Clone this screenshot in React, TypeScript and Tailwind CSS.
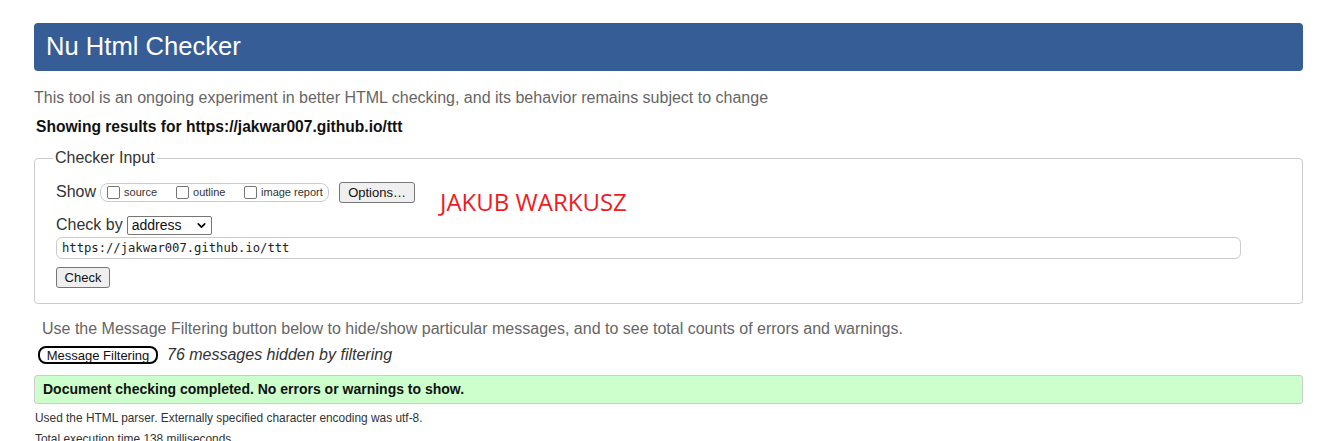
import { ChevronDown } from 'lucide-react'

const arial = 'font-["Liberation_Sans",Arial,sans-serif]'

function Checkbox({ label, width }: { label: string; width: string }) {
  return (
    <label className={`flex items-center ${width}`}>
      <span className="h-[13px] w-[13px] rounded-[2px] border border-[#767676] bg-white" />
      <span className="ml-[4px] text-[11px] leading-[13px] text-[#333]">{label}</span>
    </label>
  )
}

export default function App() {
  return (
    <div className={`relative min-h-[441px] bg-white pt-[23px] ${arial}`}>
      <div className="ml-[34px] w-[1269px]">
        <div className="flex h-[48px] items-center rounded-[4px] bg-[#365d96] px-[12px]">
          <h1 className="text-[25.6px] leading-none text-white">Nu Html Checker</h1>
        </div>

        <p className="mt-[17px] text-[16px] leading-[20px] text-[#666]">
          This tool is an ongoing experiment in better HTML checking, and its behavior remains subject to change
        </p>
        <p className="mt-[9px] ml-[2px] text-[15.6px] font-bold leading-[20px] text-[#111]">
          Showing results for https://jakwar007.github.io/ttt
        </p>

        <fieldset className="mt-[11px] rounded-[4px] border border-[#ccc] px-[21px] pb-[14px]">
          <legend className="-ml-[3px] px-[2px] text-[16px] leading-[20px] text-[#333]">Checker Input</legend>

          <div className="mt-[13px] flex h-[22px] items-center">
            <span className="text-[16px] text-[#333]">Show</span>
            <div className="ml-[4px] flex h-[19px] w-[229px] items-center rounded-[8px] border border-[#ccc] pl-[6px]">
              <Checkbox label="source" width="w-[69px]" />
              <Checkbox label="outline" width="w-[68px]" />
              <Checkbox label="image report" width="w-[80px]" />
            </div>
            <button className="ml-[10px] h-[21px] w-[76px] rounded-[3px] border border-[#767676] bg-[#efefef] text-[13px] text-[#111]">
              Options…
            </button>
          </div>

          <div className="mt-[12px] flex h-[20px] items-center">
            <span className="text-[16px] text-[#333]">Check by</span>
            <div className="ml-[4px] flex h-[19px] w-[85px] items-center justify-between rounded-[2px] border border-[#767676] bg-white pl-[4px] pr-[3px]">
              <span className="text-[14px] leading-none text-[#111]">address</span>
              <ChevronDown className="h-[13px] w-[13px] text-black" strokeWidth={3} />
            </div>
          </div>

          <div className="mt-[2px] flex h-[22px] w-[1185px] items-center rounded-[6px] border border-[#ccc] px-[5px]">
            <span className='font-["DejaVu_Sans_Mono",monospace] text-[12.2px] text-[#222]'>
              https://jakwar007.github.io/ttt
            </span>
          </div>

          <button className="mt-[8px] h-[21px] w-[54px] rounded-[3px] border border-[#767676] bg-[#efefef] text-[13px] text-[#111]">
            Check
          </button>
        </fieldset>

        <p className="mt-[15px] ml-[8px] text-[16px] leading-[20px] text-[#666]">
          Use the Message Filtering button below to hide/show particular messages, and to see total counts of errors and warnings.
        </p>

        <div className="mt-[6px] flex h-[20px] items-center">
          <button className="ml-[4px] h-[18px] w-[120px] rounded-[8px] border-2 border-black text-[13px] leading-none text-[#111]">
            Message Filtering
          </button>
          <span className="ml-[9px] text-[16px] italic text-[#333]">76 messages hidden by filtering</span>
        </div>

        <div className="mt-[10px] flex h-[29px] items-center rounded-[3px] border border-[#ccc] bg-[#ccffcc] pl-[8px]">
          <span className="text-[14px] font-bold text-[#111]">
            Document checking completed. No errors or warnings to show.
          </span>
        </div>

        <p className="mt-[7px] ml-[1px] text-[11.9px] leading-[15px] text-[#333]">
          Used the HTML parser. Externally specified character encoding was utf-8.
        </p>
        <p className="mt-[6px] ml-[1px] text-[11.9px] leading-[15px] text-[#333]">
          Total execution time 138 milliseconds.
        </p>
      </div>

      <span className='absolute left-[440px] top-[187px] font-["Open_Sans",sans-serif] text-[24px] leading-[30px] text-[#ed1c24]'>
        JAKUB WARKUSZ
      </span>
    </div>
  )
}
